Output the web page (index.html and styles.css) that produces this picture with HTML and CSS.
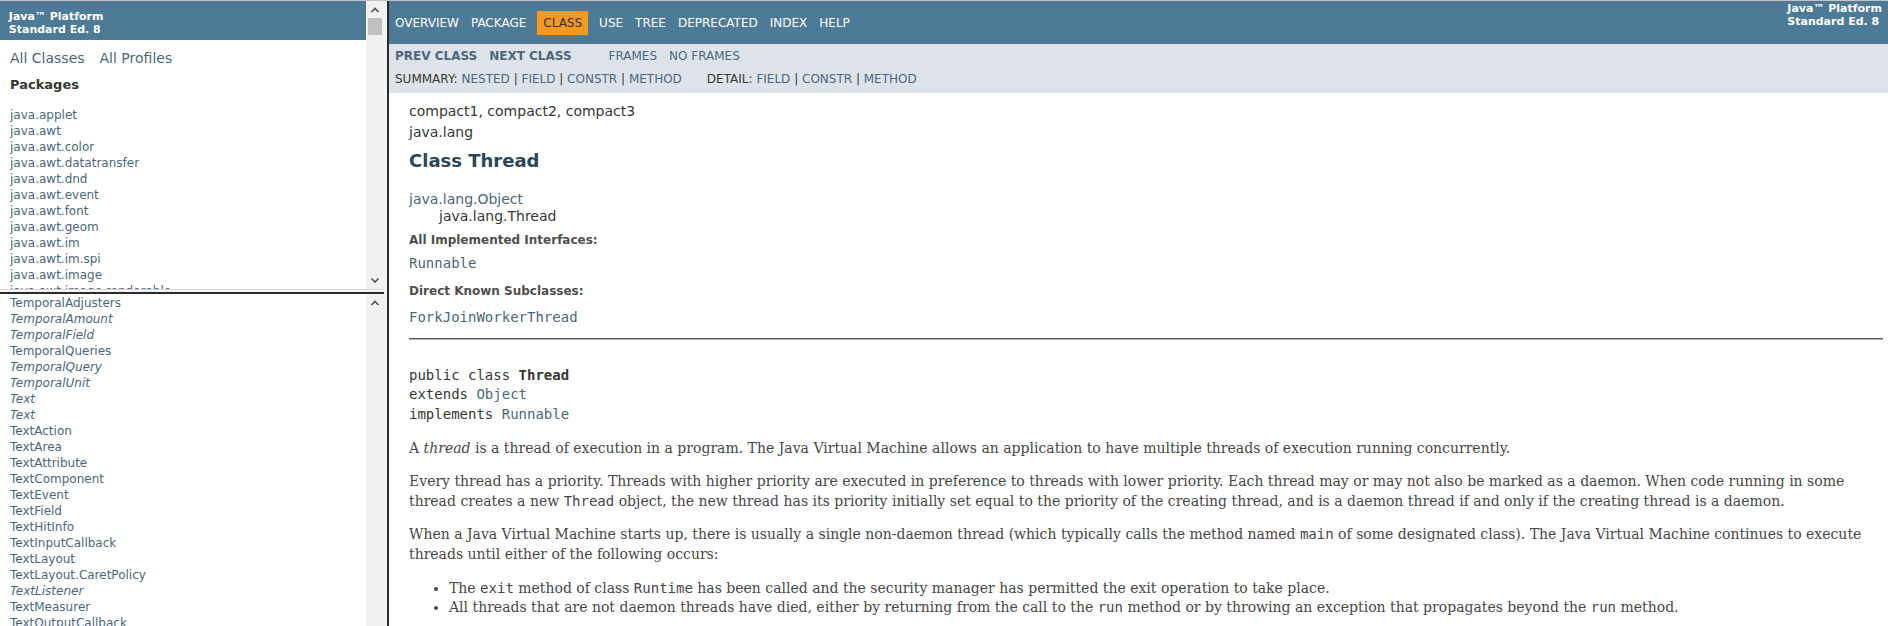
FILE: index.html
```html
<!DOCTYPE html>
<html lang="en">
<head>
<meta charset="utf-8">
<title>Thread (Java Platform SE 8)</title>
<link rel="stylesheet" href="styles.css">
</head>
<body>
<div class="frameset">
  <div class="leftCol">
    <div class="frame frameTop">
      <div class="frameBody">
        <h1 class="bar"><strong>Java™ Platform<br>Standard Ed. 8</strong></h1>
        <div class="indexHeader"><span><a href="#">All&nbsp;Classes</a></span><span><a href="#">All&nbsp;Profiles</a></span></div>
        <div class="indexContainer">
          <h2>Packages</h2>
          <ul>
            <li><a href="#">java.applet</a></li>
            <li><a href="#">java.awt</a></li>
            <li><a href="#">java.awt.color</a></li>
            <li><a href="#">java.awt.datatransfer</a></li>
            <li><a href="#">java.awt.dnd</a></li>
            <li><a href="#">java.awt.event</a></li>
            <li><a href="#">java.awt.font</a></li>
            <li><a href="#">java.awt.geom</a></li>
            <li><a href="#">java.awt.im</a></li>
            <li><a href="#">java.awt.im.spi</a></li>
            <li><a href="#">java.awt.image</a></li>
            <li><a href="#">java.awt.image.renderable</a></li>
            <li><a href="#">java.awt.print</a></li>
          </ul>
        </div>
      </div>
      <div class="vscroll">
        <div class="sbBtn"><svg width="18" height="17" viewBox="0 0 18 17"><polyline points="5.5,11 9,7.5 12.5,11" fill="none" stroke="#505050" stroke-width="1.6"/></svg></div>
        <div class="sbTrack"><div class="sbThumb"></div></div>
        <div class="sbBtn"><svg width="18" height="17" viewBox="0 0 18 17"><polyline points="5.5,6.5 9,10 12.5,6.5" fill="none" stroke="#505050" stroke-width="1.6"/></svg></div>
      </div>
    </div>
    <div class="hsplit"></div>
    <div class="frame frameBottom">
      <div class="frameBody">
        <div class="indexContainer scrolled">
          <ul>
            <li><a href="#">TemporalAdjusters</a></li>
            <li><a href="#"><i>TemporalAmount</i></a></li>
            <li><a href="#"><i>TemporalField</i></a></li>
            <li><a href="#">TemporalQueries</a></li>
            <li><a href="#"><i>TemporalQuery</i></a></li>
            <li><a href="#"><i>TemporalUnit</i></a></li>
            <li><a href="#"><i>Text</i></a></li>
            <li><a href="#"><i>Text</i></a></li>
            <li><a href="#">TextAction</a></li>
            <li><a href="#">TextArea</a></li>
            <li><a href="#">TextAttribute</a></li>
            <li><a href="#">TextComponent</a></li>
            <li><a href="#">TextEvent</a></li>
            <li><a href="#">TextField</a></li>
            <li><a href="#">TextHitInfo</a></li>
            <li><a href="#">TextInputCallback</a></li>
            <li><a href="#">TextLayout</a></li>
            <li><a href="#">TextLayout.CaretPolicy</a></li>
            <li><a href="#"><i>TextListener</i></a></li>
            <li><a href="#">TextMeasurer</a></li>
            <li><a href="#">TextOutputCallback</a></li>
            <li><a href="#">TextSyntax</a></li>
            <li><a href="#">TextUI</a></li>
          </ul>
        </div>
      </div>
      <div class="vscroll">
        <div class="sbBtn"><svg width="18" height="17" viewBox="0 0 18 17"><polyline points="5.5,11 9,7.5 12.5,11" fill="none" stroke="#505050" stroke-width="1.6"/></svg></div>
        <div class="sbTrack"></div>
      </div>
    </div>
  </div>
  <div class="vsplit"></div>
  <div class="rightCol">
    <div class="topNav">
      <ul class="navList">
        <li><a href="#">Overview</a></li>
        <li><a href="#">Package</a></li>
        <li class="navBarCell1Rev">Class</li>
        <li><a href="#">Use</a></li>
        <li><a href="#">Tree</a></li>
        <li><a href="#">Deprecated</a></li>
        <li><a href="#">Index</a></li>
        <li><a href="#">Help</a></li>
      </ul>
      <div class="aboutLanguage"><strong>Java™&nbsp;Platform<br>Standard&nbsp;Ed.&nbsp;8</strong></div>
    </div>
    <div class="subNav">
      <div class="subNavRow">
        <ul class="navList">
          <li><a href="#"><span class="typeNameLink">Prev&nbsp;Class</span></a></li>
          <li><a href="#"><span class="typeNameLink">Next&nbsp;Class</span></a></li>
        </ul>
        <ul class="navList">
          <li><a href="#">Frames</a></li>
          <li><a href="#">No&nbsp;Frames</a></li>
        </ul>
      </div>
      <div class="subNavDetail">
        <ul class="subNavList">
          <li>Summary:&nbsp;</li>
          <li><a href="#">Nested</a>&nbsp;|&nbsp;</li>
          <li><a href="#">Field</a>&nbsp;|&nbsp;</li>
          <li><a href="#">Constr</a>&nbsp;|&nbsp;</li>
          <li><a href="#">Method</a></li>
        </ul>
        <ul class="subNavList">
          <li>Detail:&nbsp;</li>
          <li><a href="#">Field</a>&nbsp;|&nbsp;</li>
          <li><a href="#">Constr</a>&nbsp;|&nbsp;</li>
          <li><a href="#">Method</a></li>
        </ul>
      </div>
    </div>
    <div class="header">
      <div class="subTitle">compact1, compact2, compact3</div>
      <div class="subTitle">java.lang</div>
      <h2 class="title">Class Thread</h2>
    </div>
    <div class="contentContainer">
      <ul class="inheritance">
        <li><a href="#">java.lang.Object</a></li>
        <li class="inheritChild">java.lang.Thread</li>
      </ul>
      <div class="description">
        <dl>
          <dt>All Implemented Interfaces:</dt>
          <dd><a href="#">Runnable</a></dd>
        </dl>
        <dl class="second">
          <dt>Direct Known Subclasses:</dt>
          <dd><a href="#">ForkJoinWorkerThread</a></dd>
        </dl>
        <hr>
        <pre>public class <span class="typeNameLabel">Thread</span>
extends <a href="#">Object</a>
implements <a href="#">Runnable</a></pre>
        <div class="block">
          <p class="first">A <i>thread</i> is a thread of execution in a program. The Java Virtual Machine allows an application to have multiple threads of execution running concurrently.</p>
          <p>Every thread has a priority. Threads with higher priority are executed in preference to threads with lower priority. Each thread may or may not also be marked as a daemon. When code running in some thread creates a new <code>Thread</code> object, the new thread has its priority initially set equal to the priority of the creating thread, and is a daemon thread if and only if the creating thread is a daemon.</p>
          <p>When a Java Virtual Machine starts up, there is usually a single non-daemon thread (which typically calls the method named <code>main</code> of some designated class). The Java Virtual Machine continues to execute threads until either of the following occurs:</p>
          <ul class="bullets">
            <li>The <code>exit</code> method of class <code>Runtime</code> has been called and the security manager has permitted the exit operation to take place.</li>
            <li>All threads that are not daemon threads have died, either by returning from the call to the <code>run</code> method or by throwing an exception that propagates beyond the <code>run</code> method.</li>
          </ul>
          <p>There are two ways to create a new thread of execution.</p>
        </div>
      </div>
    </div>
  </div>
</div>
</body>
</html>
```
FILE: styles.css
```css
html, body {
  margin: 0;
  padding: 0;
  overflow: hidden;
  background: #ffffff;
}
body {
  color: #353833;
  font-family: "DejaVu Sans", Arial, sans-serif;
  font-size: 14px;
  width: 1888px;
  height: 626px;
}
a {
  color: #4A6782;
  text-decoration: none;
}
.frameset {
  display: grid;
  grid-template-columns: 384px 5px 1514px;
  height: 900px;
  border-top: 1px solid #c3c3c3;
}
.leftCol {
  display: grid;
  grid-template-rows: 288px 5px 1fr;
  min-height: 0;
}
.frame {
  display: flex;
  overflow: hidden;
  min-height: 0;
}
.frameBody {
  flex: 1;
  overflow: hidden;
  min-width: 0;
}
.vscroll {
  width: 18px;
  flex: none;
  display: flex;
  flex-direction: column;
  background: #f1f1f1;
}
.sbBtn {
  height: 17px;
  flex: none;
  display: flex;
  align-items: center;
  justify-content: center;
}
.sbBtn svg { display: block; }
.sbTrack {
  flex: 1;
  padding: 0 2px;
}
.sbThumb {
  height: 17px;
  background: #c1c1c1;
}
.hsplit {
  background: #f4f4f4;
  border-bottom: 2px solid #2b2b2b;
  border-top: 1px solid #d6d6d6;
}
.vsplit {
  background: #f4f4f4;
  border-right: 2px solid #2b2b2b;
}

/* left frames */
.bar {
  background-color: #4D7A97;
  color: #ffffff;
  padding: 8.8px 5.5px 4.4px 8.8px;
  font-size: 11px;
  margin: 0;
  line-height: 13px;
}
.indexHeader {
  margin: 10px;
}
.indexHeader span {
  margin-right: 15px;
}
.indexContainer {
  margin: 10px;
  font-size: 12px;
}
.indexContainer h2 {
  font-size: 13px;
  margin: 11px 0 11px;
  padding: 0 0 3px 0;
}
.indexContainer ul {
  margin: 0;
  padding: 0;
  list-style: none;
}
.indexContainer li {
  padding-top: 2px;
  line-height: 14px;
}
.indexContainer.scrolled {
  margin-top: 0;
}

/* right frame */
.rightCol {
  min-width: 0;
  overflow: hidden;
}
.topNav {
  background-color: #4D7A97;
  color: #ffffff;
  height: 33px;
  padding-top: 10px;
  font-size: 12px;
  display: flex;
  justify-content: space-between;
  align-items: flex-start;
}
.topNav a { color: #ffffff; }
.navList {
  display: flex;
  margin: 0 25px 0 0;
  padding: 0;
  list-style: none;
}
.navList li {
  padding: 5px 6px;
  text-transform: uppercase;
  line-height: 14px;
}
.navBarCell1Rev {
  background-color: #F8981D;
  color: #253441;
  margin: 0 5px;
}
.aboutLanguage {
  padding: 0 21px;
  font-size: 11px;
  margin-top: -9px;
  line-height: 13px;
}
.subNav {
  background-color: #dee3e9;
  font-size: 12px;
}
.subNavRow {
  display: flex;
}
.typeNameLink { font-weight: bold; }
.subNavDetail {
  display: flex;
  padding: 4px 0 7px 6px;
  text-transform: uppercase;
}
.subNavList {
  display: flex;
  margin: 0 25px 0 0;
  padding: 0;
  list-style: none;
}
.subNavList li { line-height: 14px; }

.header {
  margin: 0 20px;
  padding-top: 5px;
}
.subTitle {
  margin-top: 5px;
}
.title {
  color: #2c4557;
  font-size: 18px;
  margin: 10px 0;
}
.contentContainer {
  padding: 10px 20px;
}
.inheritance {
  margin: 0;
  padding: 0;
  list-style: none;
}
.inheritChild {
  padding: 1px 0 0 30px;
}
.description {
  line-height: 1.4;
  margin-top: 6px;
}
.description dl {
  margin: 0;
}
.description dt {
  font-size: 12px;
  font-weight: bold;
  color: #4E4E4E;
  margin-top: 8px;
}
.description dd {
  margin: 5px 0 10px 0;
  font-family: "DejaVu Sans Mono", monospace;
  font-size: 14px;
}
.description dl.second dd {
  margin-top: 8px;
}
.description hr {
  margin: 8px 0 0 0;
  border: 0;
  border-top: 1px solid #555555;
  border-bottom: 1px solid #b8b8b8;
}
.description pre {
  font-family: "DejaVu Sans Mono", monospace;
  font-size: 14px;
  margin: 26px 0 14px 0;
}
.typeNameLabel { font-weight: bold; }
.block {
  font-family: "DejaVu Serif", Georgia, serif;
  font-size: 14px;
  color: #474747;
  margin: 3px 10px 2px 0;
}
.block p {
  margin: 14px 0;
}
.block p.first {
  margin-top: 0;
}
.block code {
  font-family: "DejaVu Sans Mono", monospace;
  font-size: 14px;
}
.bullets {
  margin: 14px 0;
  padding-left: 40px;
}
```
